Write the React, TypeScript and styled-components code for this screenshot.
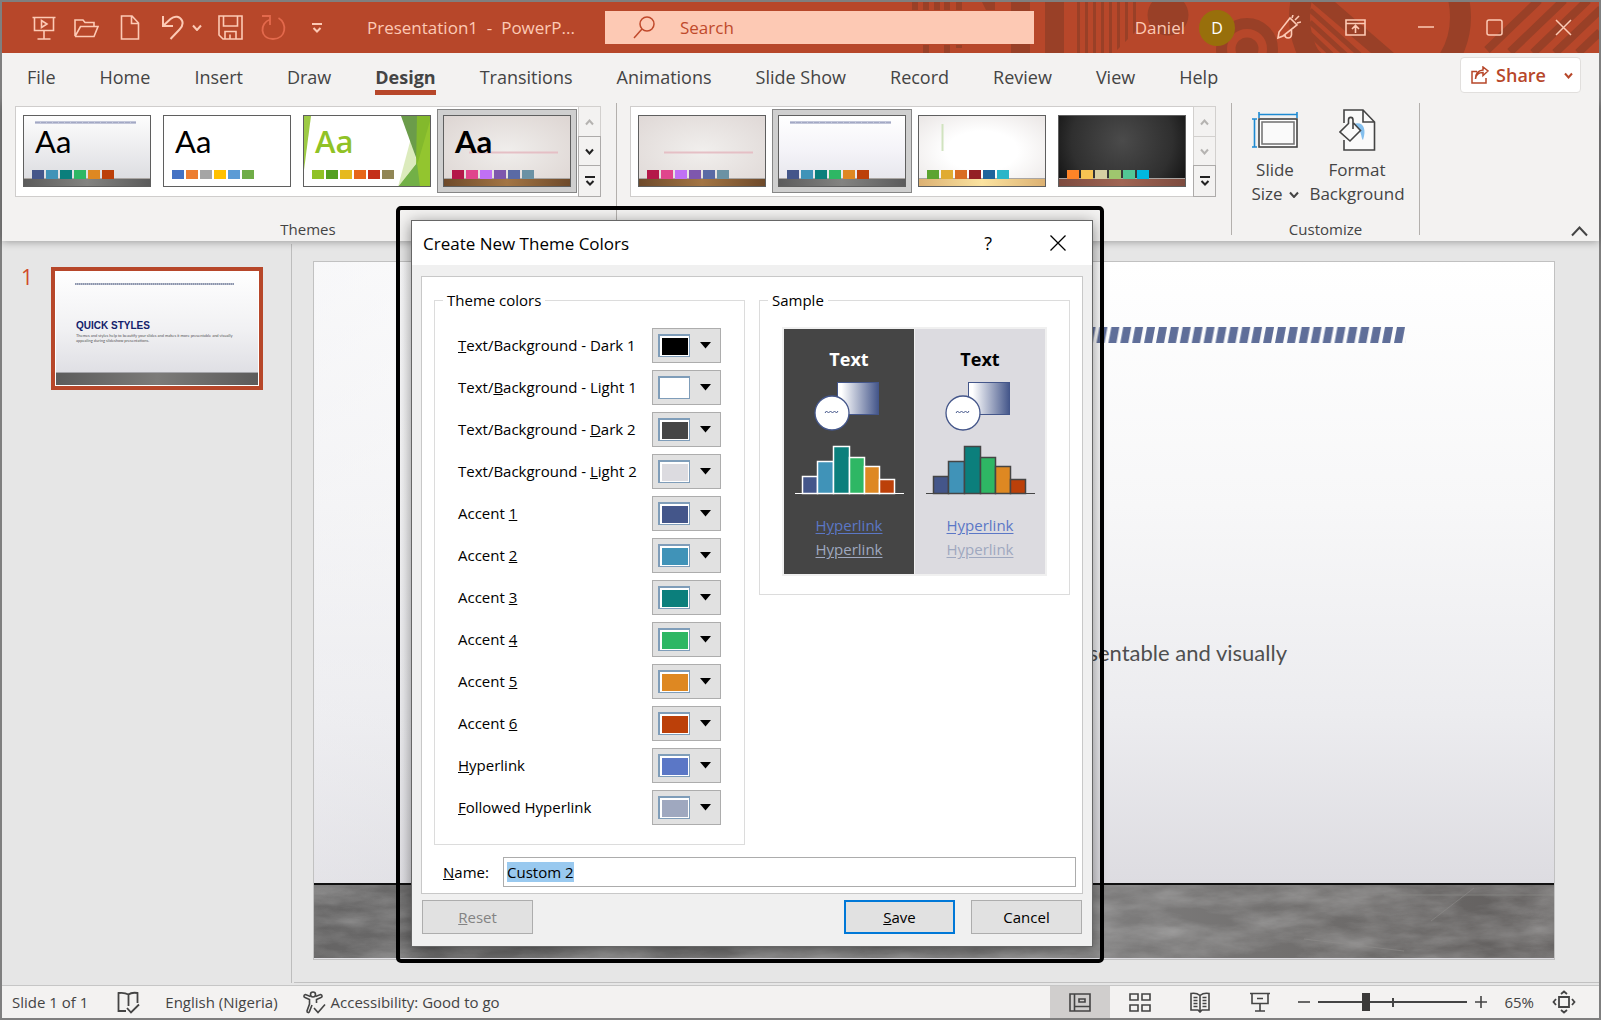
import React, { useEffect, useRef } from "react";
import styled, { createGlobalStyle } from "styled-components";

const UI = `"Open Sans", "Noto Sans", sans-serif`;

const GlobalStyle = createGlobalStyle`
  * { box-sizing: border-box; }
  body { margin: 0; font-family: ${UI}; color: #444; background: #e6e6e6; }
  button, input { font-family: inherit; }
  button { padding: 0; border: 0; background: none; color: inherit; }
  svg { display: block; }
`;

const Window = styled.div`
  position: relative;
  display: flex;
  flex-direction: column;
  min-height: 100vh;
  border: 2px solid #7f7f7f;
  background: #e6e6e6;
`;

/* ---------- title bar ---------- */
const TitleBar = styled.header`
  position: relative;
  display: flex;
  align-items: center;
  height: 51px;
  padding: 0 27px 0 28px;
  background: #b7472a;
  color: #fdcab5;
  font-size: 17px;
`;
const Pattern = styled.svg`
  position: absolute;
  top: 0;
  right: 0;
`;
const QuickAccess = styled.div`
  display: flex;
  align-items: center;
`;
const IconButton = styled.button<{ $w: number }>`
  display: flex;
  justify-content: center;
  align-items: center;
  width: ${(p) => p.$w}px;
  height: 28px;
`;
const SplitButton = styled.div`
  display: flex;
  justify-content: center;
  align-items: center;
  gap: 7px;
  width: 74px;
`;
const DocTitle = styled.div`
  width: 275px;
  padding-left: 37px;
  white-space: pre;
`;
const SearchBox = styled.label`
  position: relative;
  display: flex;
  align-items: center;
  gap: 23px;
  flex: 0 1 429px;
  height: 33px;
  padding-left: 28px;
  background: #fdc9b4;
  color: #c0492b;
`;
const SearchInput = styled.input`
  flex: 1;
  min-width: 0;
  border: 0;
  outline: 0;
  background: transparent;
  font-size: 17px;
  &::placeholder { color: #c0492b; opacity: 1; }
`;
const Account = styled.div`
  position: relative;
  display: flex;
  align-items: center;
  flex: 1;
  justify-content: flex-end;
  white-space: nowrap;
`;
const Avatar = styled.span`
  display: grid;
  place-items: center;
  width: 36px;
  height: 36px;
  margin: 0 41px 0 14px;
  border-radius: 50%;
  background: #986f0b;
  color: #fff;
  font-size: 16px;
`;
const WindowButtons = styled.div`
  display: flex;
  align-items: center;
  gap: 44px;
  & + & { margin-left: 52px; }
`;

/* ---------- tabs ---------- */
const TabBar = styled.nav`
  position: relative;
  z-index: 1;
  display: flex;
  justify-content: space-between;
  height: 50px;
  padding: 4px 18px 0 25px;
  background: #f3f2f1;
`;
const Tabs = styled.div`
  display: flex;
  gap: 44px;
  padding-top: 8px;
`;
const Tab = styled.button<{ $active?: boolean }>`
  height: 30px;
  padding-bottom: 1px;
  border-bottom: 5px solid ${(p) => (p.$active ? "#b7472a" : "transparent")};
  font-size: 18px;
  font-weight: ${(p) => (p.$active ? 700 : 400)};
  line-height: 24px;
  white-space: nowrap;
`;
const ShareButton = styled.button`
  display: flex;
  align-items: center;
  gap: 7px;
  height: 36px;
  padding: 0 7px 0 10px;
  border: 1px solid #e1dfdd;
  border-radius: 4px;
  background: #fff;
  color: #b7472a;
  font-size: 18px;
  font-weight: 600;
  svg:last-child { margin-left: 11px; }
`;

/* ---------- ribbon ---------- */
const Ribbon = styled.section`
  display: flex;
  position: relative;
  height: 138px;
  background: #f3f2f1;
  box-shadow: 0 1px 8px rgba(0, 0, 0, 0.32);
`;
const Group = styled.div`
  display: flex;
  flex-direction: column;
  justify-content: space-between;
  height: 132px;
  padding: 3px 15px 0 13px;
  border-right: 1px solid #b3b0ad;
`;
const CommandGroup = styled(Group)`
  width: 188px;
  padding: 6px 8px 0;
`;
const GroupLabel = styled.div`
  height: 18px;
  margin-bottom: -3px;
  font-size: 15px;
  line-height: 18px;
  text-align: center;
`;
const Gallery = styled.div`
  display: flex;
  height: 91px;
  border: 1px solid #cfcdcc;
  background: #fff;
`;
const Cells = styled.div`
  display: flex;
  padding: 2px 1px;
`;
const Cell = styled.button<{ $selected?: boolean }>`
  width: 140px;
  height: 84px;
  padding: 5px;
  border: 1px solid ${(p) => (p.$selected ? "#868686" : "transparent")};
  background: ${(p) => (p.$selected ? "#cfcfcf" : "transparent")};
`;
const Thumb = styled.span<{ $bg: string }>`
  display: flex;
  flex-direction: column;
  justify-content: flex-end;
  position: relative;
  height: 72px;
  border: 1px solid #5f5f5f;
  background: ${(p) => p.$bg};
  overflow: hidden;
`;
const ThumbArt = styled.svg`
  position: absolute;
  inset: 0;
`;
const Sample = styled.span<{ $color: string; $font: string; $weight: number }>`
  position: relative;
  padding-left: 11px;
  color: ${(p) => p.$color};
  font-family: ${(p) => p.$font};
  font-weight: ${(p) => p.$weight};
  font-size: 31px;
  line-height: 34px;
  text-align: left;
`;
const Palette = styled.span`
  display: flex;
  position: relative;
  gap: 2px;
  padding: 12px 0 7px 8px;
`;
const Chip = styled.span<{ $c: string }>`
  width: 12px;
  height: 9px;
  background: ${(p) => p.$c};
`;
const ScrollColumn = styled.div`
  display: grid;
  grid-template-rows: 30px 29px 30px;
  width: 22px;
  border-left: 1px solid #cfcdcc;
`;
const ScrollButton = styled.button<{ $off?: boolean }>`
  display: grid;
  place-items: center;
  background: #f3f2f1;
  box-shadow: 0 0 0 1px ${(p) => (p.$off ? "#d2d0ce" : "#adabaa")};
  color: ${(p) => (p.$off ? "#b5b3b1" : "#222")};
`;
const Commands = styled.div`
  display: flex;
`;
const Command = styled.button<{ $w: number }>`
  display: flex;
  flex-direction: column;
  align-items: center;
  width: ${(p) => p.$w}px;
  font-size: 17px;
  line-height: 24px;
  svg { margin-bottom: 7px; }
`;
const CaretLine = styled.span`
  display: flex;
  align-items: center;
  gap: 6px;
  svg { margin: 0; }
`;
const Collapse = styled.button`
  align-self: flex-end;
  margin: 0 11px 4px auto;
`;

/* ---------- workspace ---------- */
const Workspace = styled.main`
  display: flex;
  flex: 1;
`;
const SlidePane = styled.aside`
  display: flex;
  align-items: flex-start;
  width: 290px;
  padding: 23px 28px 0 19px;
  margin: 3px 0 2px;
  border-right: 1px solid #bdbdbd;
`;
const SlideNumber = styled.span`
  width: 30px;
  color: #d04a2a;
  font-size: 21px;
  line-height: 20px;
`;
const MiniSlide = styled.button`
  display: flex;
  flex-direction: column;
  width: 212px;
  height: 123px;
  border: 4px solid #b7472a;
  outline: 1px solid #fff;
  outline-offset: -5px;
  background: linear-gradient(#fff, #f1f1f3 50%, #dadae0);
  text-align: left;
`;
const MiniRule = styled.span`
  height: 2px;
  margin: 12px 25px 34px 20px;
  background: repeating-linear-gradient(90deg, #8c95ad 0 1px, #b4bac9 1px 2px);
`;
const MiniTitle = styled.span`
  padding-left: 21px;
  color: #13216a;
  font: 700 10px/14px "Liberation Sans", Arial, sans-serif;
`;
const MiniText = styled.span`
  padding-left: 21px;
  color: #555;
  font: 4px/5px Lato, sans-serif;
`;
const MiniFloor = styled.span`
  height: 13px;
  margin: auto 1px 1px;
  border-top: 1px solid #a5a5aa;
  background: linear-gradient(90deg, #5c5c5c, #7c7b79 50%, #5c5b5b);
`;
const Stage = styled.div`
  display: flex;
  flex: 1;
  margin: 0 0 2px 2px;
  padding: 20px 44px 22px 19px;
  border-bottom: 1px solid #c1c1c1;
`;
const Slide = styled.div`
  display: flex;
  flex-direction: column;
  flex: 1;
  border: 1px solid #c1c1c1;
  background: linear-gradient(100deg, rgba(240, 240, 243, 0.5), rgba(255, 255, 255, 0) 30%),
    linear-gradient(#fff 0, #f7f7f8 35%, #ececef 65%, #dddce1 89%);
`;
const SlideRule = styled.svg`
  width: auto;
  height: 16px;
  margin: 65px 148px 0 122px;
`;
const SlideText = styled.p`
  margin: auto 267px 215px 100px;
  color: #4f4f4f;
  font: 22px/30px Lato, sans-serif;
  text-align: right;
  white-space: nowrap;
`;
const Floor = styled.svg`
  width: 100%;
  height: 75px;
  margin-bottom: 1px;
  border-top: 2px solid #111;
`;

/* ---------- status bar ---------- */
const StatusBar = styled.footer`
  display: flex;
  align-items: center;
  height: 33px;
  padding: 0 23px 0 10px;
  border-top: 1px solid #c6c6c6;
  background: #f3f2f1;
  font-size: 15px;
  white-space: nowrap;
`;
const StatusItem = styled.button<{ $gap?: number }>`
  display: flex;
  align-items: center;
  gap: 5px;
  margin-right: ${(p) => p.$gap ?? 25}px;
  font-size: 15px;
`;
const Views = styled.div`
  display: flex;
  align-self: stretch;
  margin-left: auto;
`;
const ViewButton = styled.button<{ $active?: boolean }>`
  display: grid;
  place-items: center;
  width: 60px;
  background: ${(p) => (p.$active ? "#d0cecd" : "transparent")};
`;
const Zoom = styled.div`
  display: flex;
  align-items: center;
  gap: 8px;
  margin: 0 17px 0 8px;
`;
const ZoomRange = styled.input`
  appearance: none;
  width: 149px;
  height: 18px;
  margin: 0;
  background:
    linear-gradient(#444, #444) center / 2px 9px no-repeat,
    linear-gradient(#444, #444) center / 100% 2px no-repeat;
  &::-webkit-slider-thumb {
    appearance: none;
    width: 8px;
    height: 18px;
    background: #3b3a39;
  }
`;

/* ---------- dialog ---------- */
const Frame = styled.div`
  position: absolute;
  top: 204px;
  left: 394px;
  width: 708px;
  padding: 10px 7px 12px 11px;
  border: 4px solid #000;
  border-radius: 5px;
`;
const Dialog = styled.div`
  border: 1px solid #666;
  background: #f0f0f0;
  color: #000;
  font-size: 15px;
  box-shadow: 0 3px 14px rgba(0, 0, 0, 0.45);
`;
const DialogTitle = styled.div`
  display: flex;
  align-items: center;
  height: 44px;
  padding: 0 26px 0 11px;
  background: #fff;
  h2 { margin: 0; flex: 1; font-size: 17px; font-weight: 400; }
`;
const HelpButton = styled.button`
  margin-right: 58px;
  font-size: 18px;
`;
const DialogBody = styled.form`
  padding: 11px 9px 12px;
`;
const Panel = styled.div`
  padding: 12px 6px 6px 12px;
  border: 1px solid #c8c8c8;
  background: #fff;
`;
const Columns = styled.div`
  display: flex;
  align-items: flex-start;
  gap: 14px;
  padding-right: 6px;
`;
const Box = styled.fieldset<{ $w: number }>`
  width: ${(p) => p.$w}px;
  margin: 0;
  padding: 0;
  border: 1px solid #dcdcdc;
  legend { margin-left: 8px; padding: 0 4px; line-height: 22px; }
`;
const ColorRows = styled.div`
  display: grid;
  gap: 7px;
  padding: 17px 23px 19px;
`;
const ColorRow = styled.div`
  display: flex;
  align-items: center;
  justify-content: space-between;
  white-space: nowrap;
  label { padding-bottom: 2px; }
`;
const ColorButton = styled.button`
  display: flex;
  align-items: center;
  gap: 10px;
  width: 69px;
  height: 35px;
  padding-left: 5px;
  border: 1px solid #adadad;
  background: #e1e1e1;
`;
const Swatch = styled.span<{ $c: string }>`
  width: 32px;
  height: 23px;
  border: 1px solid #7f9db9;
  border-top-width: 2px;
  border-left-width: 2px;
  background: ${(p) => p.$c};
  box-shadow: inset 1px 1px 0 1px #fff, inset -1px -1px 0 #fff;
`;
const Preview = styled.div`
  display: flex;
  gap: 1px;
  margin: 16px 22px 18px;
  border: 2px solid #f0f0f0;
  background: #f0f0f0;
`;
const Half = styled.div<{ $bg: string; $fg: string }>`
  flex: 1;
  padding: 18px 0 13px;
  background: ${(p) => p.$bg};
  color: ${(p) => p.$fg};
  text-align: center;
  strong { display: block; font-size: 18px; line-height: 24px; }
`;
const Art = styled.svg`
  margin-bottom: 12px;
`;
const SampleLink = styled.a<{ $c: string }>`
  display: block;
  color: ${(p) => p.$c};
  line-height: 24px;
  text-underline-offset: 2px;
`;
const NameRow = styled.div`
  display: flex;
  align-items: center;
  margin-top: 12px;
  padding-left: 9px;
  label { width: 60px; }
`;
const NameInput = styled.input`
  flex: 1;
  height: 30px;
  padding: 0 3px;
  border: 1px solid #acacac;
  outline: 0;
  background: #fff;
  color: #000;
  font-size: 15px;
  &::selection { background: #99c9ef; color: #000; }
`;
const Buttons = styled.div`
  display: flex;
  gap: 16px;
  margin: 6px 1px 0;
  button:first-child { margin-right: auto; }
`;
const DialogButton = styled.button<{ $primary?: boolean }>`
  width: 111px;
  height: 34px;
  border: ${(p) => (p.$primary ? "2px solid #0078d7" : "1px solid #adadad")};
  background: #e1e1e1;
  font-size: 15px;
  &:disabled { color: #838383; }
`;

/* ---------- drawings ---------- */
type IconProps = { w: number; h: number; sw?: number; color?: string; children: React.ReactNode };
const Icon = ({ w, h, sw = 1.6, color = "currentColor", children }: IconProps) => (
  <svg width={w} height={h} viewBox={`0 0 ${w} ${h}`} fill="none" stroke={color} strokeWidth={sw} aria-hidden="true">
    {children}
  </svg>
);
const Chevron = ({ up = false, w = 9, sw = 2 }: { up?: boolean; w?: number; sw?: number }) => (
  <Icon w={w} h={Math.ceil(w / 2) + 2} sw={sw}>
    <path d={up ? `M1 ${w / 2 + 1}L${w / 2} 1.5L${w - 1} ${w / 2 + 1}` : `M1 1.5L${w / 2} ${w / 2 + 1}L${w - 1} 1.5`} />
  </Icon>
);
const MoreIcon = () => (
  <Icon w={12} h={12} sw={2}>
    <path d="M1 2H11M2.5 6L6 9.5L9.5 6" />
  </Icon>
);

const HeaderPattern = () => (
  <Pattern width="690" height="51" viewBox="909 2 690 51" aria-hidden="true">
    <g fill="#994027">
      <path d="M912 2h6v8h-6zM923 2h6v8h-6zM934 2h6v8h-6zM944 2h6v8h-6zM956 2h6v8h-6zM923 45h6v8h-6zM944 45h6v8h-6zM956 45h6v3h-6zM982 2h13v8h-9zM1011 2h19v51h-19zM1045 2h19v51h-19z" />
      <path d="M1077 2h3v51h-3zM1085 2h3v51h-3zM1093 2h3v51h-3zM1101 2h3v51h-3zM1109 2h3v51h-3zM1117 2h3v45l-3 3zM1125 2h3v37l-3 3zM1133 2h3v29l-3 3z" />
      <circle cx="1168" cy="15" r="20.5" />
      <circle cx="1247" cy="49" r="11.5" />
      <path d="M1335 2l59 51h-23l-60-51z" />
    </g>
    <g fill="none" stroke="#994027">
      <circle cx="1247" cy="49" r="25.5" strokeWidth="11" />
      <circle cx="1380" cy="17" r="80.5" strokeWidth="21" />
      <path d="M1310 10l50 45M1310 22l36 33M1310 34l22 21M1310 46l10 9" strokeWidth="5" />
      <path d="M1487 50l52-50M1510 52l54-52M1533 53l55-53M1555 53l46-44M1578 53l22-21" strokeWidth="8" />
    </g>
  </Pattern>
);

/* ---------- data ---------- */
const tabs = ["File", "Home", "Insert", "Draw", "Design", "Transitions", "Animations", "Slide Show", "Record", "Review", "View", "Help"];

type ThumbData = {
  name: string;
  bg: string;
  chips: string[];
  art?: React.ReactNode;
  aa?: { color: string; font: string; weight: number };
  selected?: boolean;
};
const rose = ["#b41849", "#e0458c", "#c070f5", "#7e57ad", "#5a6aa5", "#6b92a4"];
const slate = ["#44568a", "#4093b8", "#0b7f7c", "#2eb764", "#de8822", "#bc4009"];

const floor = (from: string, mid: string) => (
  <>
    <defs>
      <linearGradient id={`floor${from.slice(1)}`}>
        <stop offset="0" stopColor={from} />
        <stop offset=".5" stopColor={mid} />
        <stop offset="1" stopColor={from} />
      </linearGradient>
    </defs>
    <rect y="63" width="126" height="8" fill={`url(#floor${from.slice(1)})`} />
    <path d="M0 62.5H126" stroke="#a9a5a2" />
  </>
);
const stripes = (
  <>
    <path d="M11 6.5H112" stroke="#c3c7da" strokeWidth="3" />
    <path d="M11 6.5H112" stroke="#a3a8c4" strokeDasharray="5 1" />
  </>
);

const themes: ThumbData[] = [
  { name: "Slate", bg: "linear-gradient(#fdfdfd, #d9dade)", chips: slate, art: <>{stripes}{floor("#5b5b5b", "#838381")}</>, aa: { color: "#000", font: `Lato, ${UI}`, weight: 400 } },
  { name: "Office", bg: "#fff", chips: ["#4472c4", "#ed7d31", "#a5a5a5", "#ffc000", "#5b9bd5", "#70ad47"], aa: { color: "#000", font: `Lato, ${UI}`, weight: 400 } },
  {
    name: "Facet", bg: "#fff", chips: ["#90c226", "#54a021", "#e6b91e", "#e76618", "#c42f1a", "#918655"],
    art: (
      <>
        <path d="M0 0h7L0 54z" fill="#9dca45" />
        <path d="M107 22L94 71h20l-1-24z" fill="#dcebbd" />
        <path d="M97 0h17l3 14-3 33z" fill="#6b9c4a" />
        <path d="M113 0h13v71h-12l-2-20z" fill="#83b92c" />
        <path d="M126 5v67H94l20-26z" fill="#93c52f" />
        <path d="M94 71l19-24 3 24z" fill="#72b047" />
      </>
    ),
    aa: { color: "#90c226", font: `"Open Sans", sans-serif`, weight: 600 },
  },
  { name: "Gallery", selected: true, bg: "radial-gradient(#f0eeec, #ddd5d2)", chips: rose, art: <><path d="M25 36.5H114" stroke="#e5bfc5" strokeWidth="2" />{floor("#6e4a2a", "#a37544")}</>, aa: { color: "#000", font: `Lato, ${UI}`, weight: 700 } },
];
const variants: ThumbData[] = [
  { name: "Rose", bg: "radial-gradient(#f1efed, #dfd8d6)", chips: rose, art: <><path d="M25 36.5H114" stroke="#e5bfc5" strokeWidth="2" />{floor("#6e4a2b", "#a37544")}</> },
  { name: "Slate variant", selected: true, bg: "linear-gradient(#fff, #f4f3f8 50%, #e4e4ea)", chips: slate, art: <>{stripes}{floor("#5b5b5c", "#838381")}</> },
  { name: "Light", bg: "radial-gradient(#fff 40%, #eae6e5)", chips: ["#5ca430", "#e0ab32", "#d96c22", "#942024", "#20649c", "#2bb5c8"], art: <><path d="M23.5 8V35" stroke="#d0e3bf" strokeWidth="2" />{floor("#dcb173", "#fbe3a0")}</> },
  { name: "Dark", bg: "radial-gradient(circle at 50% 35%, #4b4b4b, #2f2f2f 65%, #0f0f0f)", chips: ["#ff8427", "#f7c352", "#d6cfa3", "#9fc66e", "#52c795", "#00b8df"], art: floor("#7d4b3f", "#a06554") },
];

const colors: [string, string, string, string][] = [
  ["", "T", "ext/Background - Dark 1", "#000"],
  ["Text/", "B", "ackground - Light 1", "#fff"],
  ["Text/Background - ", "D", "ark 2", "#454545"],
  ["Text/Background - ", "L", "ight 2", "#dcdbe0"],
  ["Accent ", "1", "", "#44568a"],
  ["Accent ", "2", "", "#4093b8"],
  ["Accent ", "3", "", "#0b7f7c"],
  ["Accent ", "4", "", "#2eb764"],
  ["Accent ", "5", "", "#de8822"],
  ["Accent ", "6", "", "#bc4009"],
  ["", "H", "yperlink", "#5b77c6"],
  ["", "F", "ollowed Hyperlink", "#9fa8bf"],
];

const ThemeGallery = ({ items, canScroll }: { items: ThumbData[]; canScroll?: boolean }) => (
  <Gallery>
    <Cells>
      {items.map((t) => (
        <Cell key={t.name} $selected={t.selected} aria-label={t.name}>
          <Thumb $bg={t.bg}>
            <ThumbArt width="126" height="70">{t.art}</ThumbArt>
            {t.aa && <Sample $color={t.aa.color} $font={t.aa.font} $weight={t.aa.weight}>Aa</Sample>}
            <Palette>{t.chips.map((c) => <Chip key={c} $c={c} />)}</Palette>
          </Thumb>
        </Cell>
      ))}
    </Cells>
    <ScrollColumn>
      <ScrollButton $off aria-label="Scroll up"><Chevron up /></ScrollButton>
      <ScrollButton $off={!canScroll} aria-label="Scroll down"><Chevron /></ScrollButton>
      <ScrollButton aria-label="More"><MoreIcon /></ScrollButton>
    </ScrollColumn>
  </Gallery>
);

const barX = [18, 33, 49, 65, 80, 95, 110];
const barTop = [105, 90, 75, 86, 95, 108];
const SampleHalf = ({ bg, fg, line, id }: { bg: string; fg: string; line: string; id: string }) => (
  <Half $bg={bg} $fg={fg}>
    <strong>Text</strong>
    <Art width="130" height="130" viewBox="0 0 130 130" aria-hidden="true">
      <defs>
        <linearGradient id={id}>
          <stop offset="0.1" stopColor="#fff" />
          <stop offset="1" stopColor="#44568a" />
        </linearGradient>
      </defs>
      <rect x="53.5" y="11.5" width="41" height="32" fill={`url(#${id})`} stroke="#44568a" />
      <circle cx="48" cy="42" r="17" fill="#fff" stroke="#44568a" strokeWidth="1.3" />
      <path d="M41 42l1.500-2 2 2 2-2 2 2 2-2 2 2 1.500-2" fill="none" stroke="#44568a" />
      {slate.map((c, i) => (
        <rect key={c} x={barX[i] + 0.5} y={barTop[i] + 0.5} width={barX[i + 1] - barX[i]} height={122 - barTop[i]} fill={c} stroke={line} strokeWidth="1.5" />
      ))}
      <path d="M11 122.500H120" stroke={line} />
    </Art>
    <SampleLink href="#link" $c="#5b77c6">Hyperlink</SampleLink>
    <SampleLink href="#followed" $c="#9fa8bf">Hyperlink</SampleLink>
  </Half>
);

export default function App() {
  const nameRef = useRef<HTMLInputElement>(null);
  useEffect(() => {
    nameRef.current?.focus();
    nameRef.current?.select();
  }, []);

  return (
    <>
      <GlobalStyle />
      <Window>
        <TitleBar>
          <HeaderPattern />
          <QuickAccess>
            <IconButton $w={27} aria-label="Slide show">
              <Icon w={24} h={24}><path d="M.5 1.500H23.500M2.500 1.500V14.500H21.500V1.500M12 14.500V23M5.500 23H18.500M9.500 4.500V11.500L15 8z" /></Icon>
            </IconButton>
            <IconButton $w={59} aria-label="Open">
              <Icon w={25} h={20}><path d="M1 18V2H9L11 4.500H20V8M1 18.500H20L24 8.500H6.500L1 18.500" /></Icon>
            </IconButton>
            <IconButton $w={28} aria-label="New">
              <Icon w={20} h={25}><path d="M1.500 1H12L18.500 8V24H1.500zM11.500 1V8.500H18.500" /></Icon>
            </IconButton>
            <SplitButton>
              <IconButton $w={24} aria-label="Undo">
                <Icon w={24} h={25} sw={2}><path d="M2 1V11H12M2.500 10.500L9.500 4C14 0 19 1.500 21 5.500C22.500 9 21 12 18.500 14.500L9.500 24" /></Icon>
              </IconButton>
              <IconButton $w={10} aria-label="Undo history"><Chevron w={10} /></IconButton>
            </SplitButton>
            <IconButton $w={25} aria-label="Save">
              <Icon w={25} h={25}><path d="M1 1H24V24H5L1 20zM5.500 1V11H19.500V1M7 24V16.500H18V24M12 19.500V24" /></Icon>
            </IconButton>
            <IconButton $w={60} aria-label="Redo">
              <Icon w={25} h={25} sw={1.8} color="#e3694c"><path d="M1 1H9V10M9 4.500C-1.500 8-1.500 24 12 24C25.500 24 26.500 8 17.500 3" /></Icon>
            </IconButton>
            <IconButton $w={27} aria-label="Customize quick access"><MoreIcon /></IconButton>
          </QuickAccess>
          <DocTitle>Presentation1  -  PowerP...</DocTitle>
          <SearchBox>
            <Icon w={22} h={24} sw={1.5}><circle cx="14" cy="8" r="7" /><path d="M9 13L1 22" /></Icon>
            <SearchInput type="text" placeholder="Search" aria-label="Search" />
          </SearchBox>
          <Account>
            Daniel
            <Avatar>D</Avatar>
            <WindowButtons>
              <button aria-label="Coming soon">
                <Icon w={25} h={25}><path d="M2 23L3 17L14 3L21 10L7 21L2 23zM9 20C9 24 15 24 15.500 20V15M16 3L17 0M19 5L23 1M21 8L25 7" /></Icon>
              </button>
              <button aria-label="Ribbon display">
                <Icon w={21} h={17}><path d="M1 1H20V16H1zM1 4.500H20M10.500 14V7M7 10L10.500 6.500L14 10" /></Icon>
              </button>
            </WindowButtons>
            <WindowButtons>
              <button aria-label="Minimize"><Icon w={16} h={17} sw={1.5}><path d="M0 8H16" /></Icon></button>
              <IconButton $w={33} aria-label="Maximize"><Icon w={17} h={17} sw={1.5}><rect x="1" y="1" width="15" height="15" rx="2" /></Icon></IconButton>
              <button aria-label="Close"><Icon w={17} h={17} sw={1.5}><path d="M1 1L16 16M16 1L1 16" /></Icon></button>
            </WindowButtons>
          </Account>
        </TitleBar>

        <TabBar>
          <Tabs>
            {tabs.map((t) => <Tab key={t} $active={t === "Design"}>{t}</Tab>)}
          </Tabs>
          <ShareButton>
            <Icon w={18} h={18} sw={1.5}><path d="M6 5.500H1V17H15V12M4.500 13C5 8 8 6.500 12 6.500V9.500L17 5L12 1V4C7 4.500 4.500 8 4.500 13z" /></Icon>
            Share
            <Chevron w={9} />
          </ShareButton>
        </TabBar>

        <Ribbon>
          <Group>
            <ThemeGallery items={themes} canScroll />
            <GroupLabel>Themes</GroupLabel>
          </Group>
          <Group>
            <ThemeGallery items={variants} />
          </Group>
          <CommandGroup>
            <Commands>
              <Command $w={70}>
                <Icon w={46} h={42}>
                  <g stroke="#1e8ad2"><path d="M7 5.500H45M7 3V9M45 3V9M2.500 10V38M0 10H5M0 38H5" /></g>
                  <rect x="7" y="10" width="38" height="28" stroke="#444" fill="#fff" />
                  <rect x="10" y="13" width="32" height="22" stroke="#777" fill="#fafafa" />
                </Icon>
                Slide
                <CaretLine>Size <Chevron w={10} /></CaretLine>
              </Command>
              <Command $w={94}>
                <Icon w={37} h={42} sw={1.6}>
                  <path d="M5 1H24L35.500 13V41H5z" fill="#fafafa" stroke="none" />
                  <path d="M5 14V1H24L35.500 13V41H5V31M24 1V13H35.500" stroke="#444" />
                  <path d="M15 15C24 12 28 20 24 31C22 29 23 25 20 21z" fill="#83bfee" stroke="none" />
                  <path d="M1 23L10 14L15 14L21.500 22L11 32z" fill="#fafafa" stroke="none" />
                  <path d="M14 20V11C14 7.500 9.500 7.500 9.500 11V14.500L1 23L11 32L21.500 21.500L14.500 14" stroke="#444" />
                </Icon>
                <span>Format<br />Background</span>
              </Command>
            </Commands>
            <GroupLabel>Customize</GroupLabel>
          </CommandGroup>
          <Collapse aria-label="Collapse the ribbon"><Chevron up w={17} /></Collapse>
        </Ribbon>

        <Workspace>
          <SlidePane>
            <SlideNumber>1</SlideNumber>
            <MiniSlide>
              <MiniRule />
              <MiniTitle>QUICK STYLES</MiniTitle>
              <MiniText>
                Themes and styles help to beautify your slides and makes it more presentable and visually<br />
                appealing during slideshow presentations.
              </MiniText>
              <MiniFloor />
            </MiniSlide>
          </SlidePane>
          <Stage>
            <Slide>
              <SlideRule aria-hidden="true">
                <defs>
                  <pattern id="dash" x="6" width="11.9" height="16" patternUnits="userSpaceOnUse">
                    <path d="M3 0H11L8 16H0z" fill="#5f6e99" />
                  </pattern>
                </defs>
                <rect width="100%" height="16" fill="url(#dash)" />
              </SlideRule>
              <SlideText>presentable and visually</SlideText>
              <Floor aria-hidden="true">
                <defs>
                  <linearGradient id="metal">
                    <stop offset="0" stopColor="#656464" />
                    <stop offset=".45" stopColor="#7d7c7c" />
                    <stop offset=".62" stopColor="#7f7e7e" />
                    <stop offset=".8" stopColor="#706e6d" />
                    <stop offset="1" stopColor="#615e5d" />
                  </linearGradient>
                  <filter id="grain" x="0" y="0" width="100%" height="100%">
                    <feTurbulence type="fractalNoise" baseFrequency="0.015 0.05" numOctaves="6" seed="4" />
                    <feColorMatrix values="0 0 0 0 .6  0 0 0 0 .6  0 0 0 0 .6  .7 0 0 0 -.2" />
                  </filter>
                </defs>
                <rect width="100%" height="100%" fill="url(#metal)" />
                <rect width="100%" height="100%" filter="url(#grain)" />
                <path d="M1117 36L1160 3M1070 10H1240M990 54L1090 66" stroke="#8d8c8b" strokeOpacity=".6" />
              </Floor>
            </Slide>
          </Stage>
        </Workspace>

        <StatusBar>
          <StatusItem $gap={29}>Slide 1 of 1</StatusItem>
          <StatusItem aria-label="Spelling">
            <Icon w={23} h={23} sw={1.8}><path d="M11.500 3.500V15M11.500 3.500C8 1.500 5 1.500 1.500 2V20H9M11.500 3.500C14 1.500 17 1.500 20.500 2V12M10 17L14 21.500L22 13.500" /></Icon>
          </StatusItem>
          <StatusItem>English (Nigeria)</StatusItem>
          <StatusItem>
            <Icon w={23} h={23} sw={1.6}><circle cx="10" cy="3.5" r="2.5" /><path d="M7.500 5.500L2.500 3.500C.5 4 .5 6 2 6.500L6.500 8.500V13L4 20C4 22 6 22 6.500 20.500L9 14M12.500 5.500L17.500 3.500C19.500 4 19.500 6 18 6.500L13.500 8.500V12M11 17L15 21.500L22 13.500" /></Icon>
            Accessibility: Good to go
          </StatusItem>
          <Views>
            <ViewButton $active aria-label="Normal view">
              <Icon w={22} h={19}><path d="M1 1H21V18H1zM5.500 1V18M5.500 13.500H21M10 6H16V9H10z" /></Icon>
            </ViewButton>
            <ViewButton aria-label="Slide sorter">
              <Icon w={22} h={19}><path d="M1 1H9V7H1zM13 1H21V7H13zM1 12H9V18H1zM13 12H21V18H13z" /></Icon>
            </ViewButton>
            <ViewButton aria-label="Reading view">
              <Icon w={20} h={21}><path d="M10 3.500C7 1 4 1 1 1.500V18H8L10 20L12 18H19V1.500C16 1 13 1 10 3.500V19M3.500 5.500H7.500M3.500 8.500H7.500M3.500 11.500H7.500M3.500 14.500H7.500M12.500 5.500H16.500M12.500 8.500H16.500M12.500 11.500H16.500M12.500 14.500H16.500" /></Icon>
            </ViewButton>
            <ViewButton aria-label="Slide show view">
              <Icon w={20} h={20}><path d="M0 1.500H20M2 1.500V11.500H18V1.500M10 11.500V19M5 19H15M7 6.500H13" /></Icon>
            </ViewButton>
          </Views>
          <Zoom>
            <button aria-label="Zoom out"><Icon w={12} h={12}><path d="M0 6H12" /></Icon></button>
            <ZoomRange type="range" min={0} max={100} defaultValue={31} aria-label="Zoom" />
            <button aria-label="Zoom in"><Icon w={12} h={12}><path d="M0 6H12M6 0V12" /></Icon></button>
          </Zoom>
          <StatusItem $gap={18}>65%</StatusItem>
          <button aria-label="Fit to window">
            <Icon w={24} h={24} sw={1.8}><path d="M7 7H17V17H7zM9 4L12 1.500L15 4M9 20L12 22.500L15 20M4 9L1.500 12L4 15M20 9L22.500 12L20 15" /></Icon>
          </button>
        </StatusBar>

        <Frame>
          <Dialog role="dialog" aria-labelledby="dialog-title">
            <DialogTitle>
              <h2 id="dialog-title">Create New Theme Colors</h2>
              <HelpButton>?</HelpButton>
              <button aria-label="Close dialog"><Icon w={16} h={16} sw={1.3}><path d="M.5 .5L15.500 15.500M15.500 .5L.5 15.500" /></Icon></button>
            </DialogTitle>
            <DialogBody onSubmit={(e) => e.preventDefault()}>
              <Panel>
                <Columns>
                  <Box $w={313}>
                    <legend>Theme colors</legend>
                    <ColorRows>
                      {colors.map(([pre, key, post, c], i) => (
                        <ColorRow key={i}>
                          <label htmlFor={`color-${i}`}>{pre}<u>{key}</u>{post}</label>
                          <ColorButton type="button" id={`color-${i}`}>
                            <Swatch $c={c} />
                            <svg width="11" height="7" aria-hidden="true"><path d="M0 0H11L5.500 6.500z" /></svg>
                          </ColorButton>
                        </ColorRow>
                      ))}
                    </ColorRows>
                  </Box>
                  <Box $w={310}>
                    <legend>Sample</legend>
                    <Preview>
                      <SampleHalf bg="#454545" fg="#fff" line="#fff" id="fadeDark" />
                      <SampleHalf bg="#dcdbe0" fg="#000" line="#454545" id="fadeLight" />
                    </Preview>
                  </Box>
                </Columns>
                <NameRow>
                  <label htmlFor="scheme-name"><u>N</u>ame:</label>
                  <NameInput id="scheme-name" ref={nameRef} defaultValue="Custom 2" />
                </NameRow>
              </Panel>
              <Buttons>
                <DialogButton type="button" disabled><u>R</u>eset</DialogButton>
                <DialogButton type="submit" $primary><u>S</u>ave</DialogButton>
                <DialogButton type="button">Cancel</DialogButton>
              </Buttons>
            </DialogBody>
          </Dialog>
        </Frame>
      </Window>
    </>
  );
}
